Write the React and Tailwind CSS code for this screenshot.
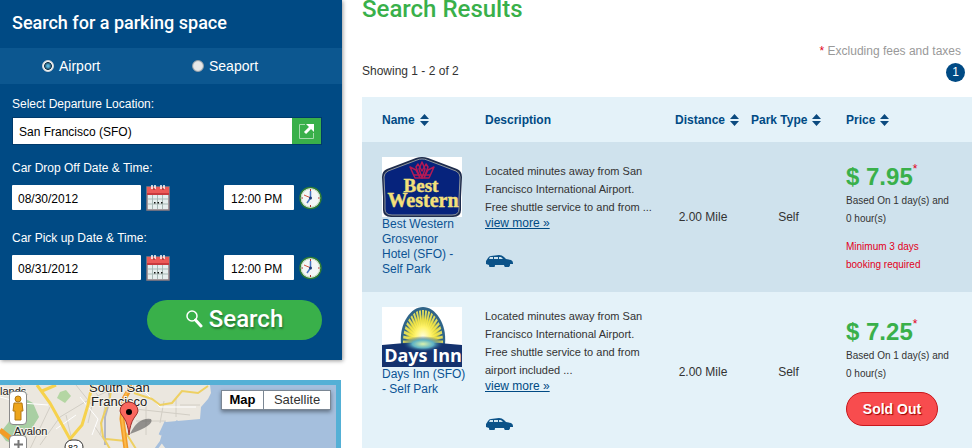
import { useState } from 'react'

const DESCRIPTION_LINES = ['Located minutes away from San', 'Francisco International Airport.']

const LOTS = [
    {
        id: 'best-western',
        name: 'Best Western Grosvenor Hotel (SFO) - Self Park',
        logo: BestWesternLogo,
        description: [...DESCRIPTION_LINES, 'Free shuttle service to and from ...'],
        distance: '2.00 Mile',
        type: 'Self',
        price: '$ 7.95',
        note: 'Minimum 3 days booking required',
    },
    {
        id: 'days-inn',
        name: 'Days Inn (SFO) - Self Park',
        logo: DaysInnLogo,
        description: [...DESCRIPTION_LINES, 'Free shuttle service to and from', 'airport included ...'],
        distance: '2.00 Mile',
        type: 'Self',
        price: '$ 7.25',
        soldOut: true,
    },
]

function BestWesternLogo() {
    return (
        <svg width="80" height="60" viewBox="0 0 80 60" role="img" aria-label="Best Western">
            <rect width="80" height="60" fill="#fff" />
            <path d="M40 0 Q43 0 46 1 L75 12 Q80 14 80 20 L79 40 V53 Q79 60 71 60 H9 Q1 60 1 53 V40 L0 20 Q0 14 5 12 L34 1 Q37 0 40 0Z" fill="#1d2b4c" />
            <path d="M40 2 Q43 2 45 3 L74 14 Q78 16 78 20 L77 42 V52 Q77 58 70 58 H10 Q3 58 3 52 V42 L2 20 Q2 16 6 14 L35 3 Q37 2 40 2Z" fill="#06237c" stroke="#8f979c" strokeWidth="1" />
            <g fill="none" stroke="#b51a55" strokeWidth="1.5" strokeLinejoin="round">
                <path d="M33 21 L28 10 L34 13 L38 21 L34 10 L36 7 L40 14 L44 7 L46 10 L42 21 L46 13 L52 10 L47 21Z" />
                <path d="M40 5 L37 12 L40 21 L43 12Z M32 18 H48" />
            </g>
            <g fill="#f4e07a" stroke="#f4e07a" strokeWidth="0.4" fontFamily="'Liberation Serif', serif" fontWeight="bold" textAnchor="middle">
                <text x="39" y="35" fontSize="19">Best</text>
                <text x="41" y="50" fontSize="20">Western</text>
            </g>
        </svg>
    )
}

const RAYS = Array.from({ length: 21 }, (_, i) => {
    const tip = angle => `${41 + 20 * Math.cos(angle)},${35 + 32 * Math.sin(angle)}`
    const angle = Math.PI + (i * Math.PI) / 20
    return `41,34 ${tip(angle - 0.05)} ${tip(angle + 0.05)}`
})

function DaysInnLogo() {
    return (
        <svg width="80" height="60" viewBox="0 0 80 60" role="img" aria-label="Days Inn">
            <defs>
                <radialGradient id="sun">
                    <stop offset="0" stopColor="#ffffe0" />
                    <stop offset="0.45" stopColor="#fff36a" />
                    <stop offset="0.75" stopColor="#f7e63c" stopOpacity="0.8" />
                    <stop offset="1" stopColor="#f7e63c" stopOpacity="0" />
                </radialGradient>
                <radialGradient id="glow">
                    <stop offset="0" stopColor="#d8f2b0" />
                    <stop offset="0.5" stopColor="#5fb3c4" />
                    <stop offset="1" stopColor="#14326e" stopOpacity="0" />
                </radialGradient>
            </defs>
            <rect width="80" height="60" fill="#fff" />
            <path d="M19 37 C17 16 29 0 41 0 C53 0 65 16 63 37Z" fill="#2f6488" />
            {RAYS.map(points => <polygon key={points} points={points} fill="#dfdc5c" />)}
            <ellipse cx="41" cy="30" rx="18" ry="23" fill="url(#sun)" />
            <path d="M0 38 Q40 33 80 38 V60 H0Z" fill="#14326e" />
            <ellipse cx="41" cy="37" rx="21" ry="8" fill="url(#glow)" />
            <text x="41" y="55" fill="#fff" fontSize="18" fontWeight="bold" fontFamily="'Open Sans', sans-serif" textAnchor="middle">Days Inn</text>
        </svg>
    )
}

function CarIcon() {
    return (
        <svg width="27" height="12" viewBox="0 0 27 12" className="block" aria-hidden="true">
            <path d="M2 3 Q3 1 5 1 L13 0 Q16 0 18 2 L20 4 L25 5 Q27 6 27 8 V9 H24 A3 3 0 0 1 18 10 H9 A3 3 0 0 1 3 10 L0 9 V6Z" fill="#0b5288" />
            <path d="M4 2 H7 V4 H3Z M8 2 H12 V4 H8Z M13 2 H15 L17 4 H13Z" fill="#cfe3ee" />
        </svg>
    )
}

function SortIcon() {
    return (
        <svg width="9" height="12" viewBox="0 0 9 12" aria-hidden="true">
            <path d="M4.500 0 L9 5 H0Z M0 7 H9 L4.500 12Z" fill="#0b4a7f" />
        </svg>
    )
}

function CalendarIcon() {
    return (
        <svg width="24" height="26" viewBox="0 0 24 26" className="block" aria-hidden="true">
            <path d="M1 2 H23 V25 H1Z" fill="#e6eeee" stroke="#8e7c80" strokeWidth="1.500" />
            <path d="M1 2 H23 V9 H1Z" fill="#ec5a58" />
            <path d="M1 8 H23 V10 H1Z" fill="#c93a3e" />
            <path d="M2 14 H22 M2 19 H22 M6.500 10 V24 M11.500 10 V24 M16.500 10 V24" stroke="#a7b8b5" />
            <path d="M6 0 V4 M9 0 V4 M15 0 V4 M18 0 V4" stroke="#fff" strokeWidth="1.500" />
            <path d="M7 4 H9 M16 4 H18" stroke="#7b2429" />
            <path d="M8 17 h1.500 v1.500 h-1.500z M11.500 17 h1.500 v1.500 h-1.500z M15 17 h1.500 v1.500 h-1.500z" fill="#111" />
        </svg>
    )
}

function ClockIcon() {
    return (
        <svg width="23" height="24" viewBox="0 0 23 24" className="block" aria-hidden="true">
            <circle cx="11.500" cy="12" r="10.500" fill="#f4f6f6" stroke="#2f7d35" strokeWidth="1.500" />
            <circle cx="11.500" cy="12" r="9.200" fill="none" stroke="#c9dcc4" />
            <path d="M11.500 3 V5 M11.500 19 V21 M2.500 12 H4 M19 12 H20.500" stroke="#a33" />
            <path d="M11.500 12 V5 M11.500 12 L8 17" stroke="#4a76c4" strokeWidth="1.500" />
            <path d="M12 12 L5 9" stroke="#d0503f" />
            <circle cx="11.500" cy="12" r="1.500" fill="#1e3c78" />
        </svg>
    )
}

function DateTimeRow({ id, label, date, time }) {
    return (
        <div className="pt-[15px] last:pb-5 [&+&]:pt-5">
            <label htmlFor={`${id}-date`} className="block text-xs leading-4">{label}</label>
            <div className="mt-[9px] flex h-[25px] items-center">
                <input id={`${id}-date`} type="text" defaultValue={date} className="h-[25px] w-[129px] rounded-[1px] bg-white px-1.5 pt-0.5 text-xs text-black outline-none" />
                <button type="button" aria-label="Pick a date" className="ml-[5px]"><CalendarIcon /></button>
                <input type="text" aria-label={`${label} time`} defaultValue={time} className="ml-auto h-[25px] w-[70px] rounded-[1px] bg-white px-[7px] pt-0.5 text-xs text-black outline-none" />
                <button type="button" aria-label="Pick a time" className="ml-[5px]"><ClockIcon /></button>
            </div>
        </div>
    )
}

function SearchPanel() {
    const [port, setPort] = useState('Airport')

    return (
        <form onSubmit={e => e.preventDefault()} className="bg-[#004a84] text-white shadow-[1px_1px_4px_#0006]">
            <h2 className="flex h-12 items-center px-3 pb-0.5 font-['Roboto',sans-serif] text-lg font-medium">Search for a parking space</h2>
            <div className="flex h-9 items-center bg-[#0c5790] pl-[42px]">
                {['Airport', 'Seaport'].map(name => (
                    <label key={name} className="flex w-[150px] items-center gap-[5px] text-sm">
                        <input
                            type="radio"
                            name="port"
                            checked={port === name}
                            onChange={() => setPort(name)}
                            className="size-3 appearance-none rounded-full border border-[#9aa3aa] bg-[radial-gradient(#e8e8e8_50%,#c8c8c8)] checked:border-[#d5d9dc] checked:bg-[radial-gradient(#59b5dd_15%,#15384f_50%,#f2f2f2_60%)]"
                        />
                        {name}
                    </label>
                ))}
            </div>
            <div className="pt-3 pr-5 pb-5 pl-3">
                <label htmlFor="location" className="block text-xs leading-4">Select Departure Location:</label>
                <div className="mt-[5px] flex h-7 border border-[#003a6b]">
                    <input id="location" type="text" defaultValue="San Francisco (SFO)" className="min-w-0 flex-1 bg-white px-1.5 pt-0.5 text-xs text-black outline-none" />
                    <button type="button" aria-label="Show locations" className="flex w-[29px] items-center justify-center bg-[#39b04a]">
                        <svg width="17" height="17" viewBox="0 0 17 17" fill="none" aria-hidden="true">
                            <path d="M7 1.500 H1.500 V15.500 H15.500 V10" stroke="#a5dcab" />
                            <path d="M7 10 L13 4" stroke="#fff" strokeWidth="3" />
                            <path d="M8 1 H16 V9Z" fill="#fff" />
                        </svg>
                    </button>
                </div>
                <div>
                    <DateTimeRow id="dropoff" label="Car Drop Off Date & Time:" date="08/30/2012" time="12:00 PM" />
                    <DateTimeRow id="pickup" label="Car Pick up Date & Time:" date="08/31/2012" time="12:00 PM" />
                </div>
                <button type="submit" className="ml-auto flex h-10 w-[175px] items-center justify-center gap-1.5 rounded-full bg-[#39b04a] pb-0.5 font-['Roboto',sans-serif] text-2xl font-medium [text-shadow:1px_2px_2px_#0005]">
                    <svg width="17" height="18" viewBox="0 0 17 18" fill="none" stroke="#fff" aria-hidden="true">
                        <circle cx="6" cy="6" r="5" strokeWidth="1.500" />
                        <path d="M9.500 10 L15 16" strokeWidth="3" strokeLinecap="round" />
                    </svg>
                    Search
                </button>
            </div>
        </form>
    )
}

function MapPanel() {
    return (
        <div className="relative mt-5 mr-px min-h-[68px] flex-1 overflow-hidden border-t-[5px] border-r-[5px] border-[#54b0d6] bg-[#a5bfdd]">
            <div className="h-0">
                <svg width="336" height="64" viewBox="0 0 336 64" className="block" aria-hidden="true">
                    <path d="M0 0 H210 L211 8 L208 14 L201 22 L200 34 L166 37 L163 45 L160 56 L166 64 H0Z" fill="#ebe7df" />
                    <path d="M0 48 L8 38 L22 12 L33 18 L39 32 L30 46 L18 60 L6 56Z" fill="#a9cfa3" />
                    <path d="M60 7 L66 5 L71 11 L65 18 L57 13Z" fill="#b4d6a3" />
                    <g fill="none" stroke="#d2cec5">
                        <path d="M40 60 L60 32 L85 17 L110 5 M76 0 L92 20 L88 38 M20 0 L28 10 M95 42 L110 64 M135 24 L190 30 M146 18 V50 M164 16 L160 38 M176 14 V32 M136 36 H166 M90 0 L105 20 L100 50 M50 22 L30 64 M66 30 L74 64 M180 20 H200" />
                    </g>
                    <g fill="none" stroke="#fff">
                        <path d="M0 12 L22 18 L48 20 M56 44 L76 30 M80 12 L98 34 L92 50 M144 6 L160 22 L196 22 M0 2 L20 8" />
                    </g>
                    <path d="M108 0 L110 14 L105 32 L105 60" fill="none" stroke="#b2b6c5" strokeWidth="2" />
                    <path d="M178 36 L169 46 L156 64 M166 37 L160 50" fill="none" stroke="#a5bfdd" strokeWidth="3" />
                    <path d="M37 0 L50 18 L70 54 L76 64 M42 6 L56 0 M70 54 L82 40 L88 20 L92 0" fill="none" stroke="#f6d24d" strokeWidth="3" />
                    <path d="M112 0 L110 12 L101 38 L103 52 L110 64 M106 54 L126 56 M126 48 L136 64 M134 8 L152 14 L160 20 L172 18 L182 6 L198 8 L208 1" fill="none" stroke="#eed062" strokeWidth="2" />
                    <path d="M132 0 L124 14 L122 34 L126 64 M0 45 L14 56" fill="none" stroke="#f29b27" strokeWidth="5" />
                    <path d="M130 0 L124 14 L122 34 L126 64" fill="none" stroke="#fbb84a" strokeWidth="2" />
                    <path d="M130 49 Q138 32 151 34 Q155 40 130 49Z" fill="#555" opacity="0.6" />
                    <g fill="#222" stroke="#f7f4ec" strokeWidth="2" paintOrder="stroke" fontFamily="'Liberation Sans', sans-serif" fontSize="13">
                        <text x="89" y="7">South San</text>
                        <text x="91" y="21">Francisco</text>
                        <text x="0" y="10" fontSize="11">lands</text>
                        <text x="14" y="50" fontSize="11">Avalon</text>
                    </g>
                    <rect x="65" y="55" width="18" height="14" rx="7" fill="#fff" stroke="#333" />
                    <text x="68" y="66" fontSize="9" fontFamily="'Liberation Sans', sans-serif">82</text>
                    <path d="M129 50 Q128 39 124 33 Q120 28 120 26 A9 9 0 0 1 138 26 Q138 28 134 33 Q130 39 129 50Z" fill="#fa675e" stroke="#9c302b" />
                    <circle cx="129" cy="27" r="3" fill="#000" />
                </svg>
            </div>
            <div className="absolute top-[6px] left-[9px] flex flex-col items-center gap-2.5">
                <button type="button" aria-label="Street View" className="flex h-[34px] w-[18px] items-center justify-center rounded-sm border border-[#8a8a8a] bg-white">
                    <svg width="12" height="26" viewBox="0 0 12 26" fill="#eda51b" stroke="#b47a13" aria-hidden="true">
                        <circle cx="6" cy="4" r="3" />
                        <path d="M2 8 H10 L11 16 H9 V25 H3 V16 H1Z" />
                    </svg>
                </button>
                <button type="button" aria-label="Zoom in" className="flex size-[18px] items-center justify-center rounded-sm border border-[#8a8a8a] bg-white">
                    <svg width="9" height="9" viewBox="0 0 9 9" aria-hidden="true"><path d="M4.500 0 V9 M0 4.500 H9" stroke="#777" strokeWidth="2" /></svg>
                </button>
            </div>
            <div className="absolute top-[5px] right-[5px] flex h-5 border border-[#7b8794] bg-white text-[13px] leading-[18px] text-[#333] shadow-[0_2px_4px_#0006]">
                <button type="button" className="w-[42px] border-r border-[#7b8794] font-bold text-black">Map</button>
                <button type="button" className="w-[66px]">Satellite</button>
            </div>
        </div>
    )
}

function HeaderCell({ children, sortable = true, className = '' }) {
    return (
        <th className={`h-[45px] p-0 text-left ${className}`}>
            {sortable ? (
                <button type="button" className="flex items-center gap-[5px] font-bold whitespace-nowrap">
                    {children}
                    <SortIcon />
                </button>
            ) : children}
        </th>
    )
}

function LotRow({ lot }) {
    const Logo = lot.logo

    return (
        <tr className="odd:bg-[#cfe2ed] even:bg-[#e4f2f9]">
            <td className="py-[15px] pl-5 align-top">
                <Logo />
                <a href="#" className="block w-[84px] text-xs leading-[15px] text-[#0b5394]">{lot.name}</a>
            </td>
            <td className="py-[15px] text-[11px] leading-[18px]">
                {lot.description.map(line => <p key={line}>{line}</p>)}
                <a href="#" className="block text-xs leading-[15px] text-[#004a84] underline">view more »</a>
                <div className="mt-6 mb-1.5 pl-px"><CarIcon /></div>
            </td>
            <td className="pr-5 text-center">{lot.distance}</td>
            <td className="pr-5 text-center">{lot.type}</td>
            <td>
                <p className="flex h-8 items-start text-2xl leading-[34px] font-bold text-[#39b04a]">
                    {lot.price}
                    <span className="text-xs leading-[18px] font-normal text-[#e2001a]">*</span>
                </p>
                <p className="w-[110px] text-[10px] leading-[18px]">Based On 1 day(s) and 0 hour(s)</p>
                {lot.note && <p className="mt-2.5 w-[90px] text-[10px] leading-[18px] text-[#e2001a]">{lot.note}</p>}
                {lot.soldOut && (
                    <button type="button" className="mt-[9px] mb-[3px] block h-[34px] w-[92px] rounded-full border border-[#c8171c] bg-[#f84c4e] text-sm font-bold text-white [text-shadow:1px_1px_1px_#900]">
                        Sold Out
                    </button>
                )}
            </td>
        </tr>
    )
}

function Results() {
    return (
        <main className="min-w-0 flex-1 pr-1 pl-5 text-xs text-[#333]">
            <h1 className="h-[42px] font-['Roboto',sans-serif] text-2xl leading-[18px] font-medium text-[#39b04a]">Search Results</h1>
            <div className="flex h-[55px] items-start justify-between">
                <p className="pt-[21px] leading-4">Showing 1 - 2 of 2</p>
                <div className="flex flex-col items-end pr-[7px]">
                    <p className="pr-1 leading-[18px] text-[#999]"><span className="text-[#e2001a]">*</span> Excluding fees and taxes</p>
                    <button type="button" className="mt-[3px] size-[19px] rounded-full bg-[#004a84] leading-[19px] text-white">1</button>
                </div>
            </div>
            <table className="w-full table-fixed">
                <thead className="bg-[#e4f2f9] text-[#004a84]">
                    <tr>
                        <HeaderCell className="w-[123px] pl-5">Name</HeaderCell>
                        <HeaderCell sortable={false}>Description</HeaderCell>
                        <HeaderCell className="w-[76px]">Distance</HeaderCell>
                        <HeaderCell className="w-[95px]">Park Type</HeaderCell>
                        <HeaderCell className="w-[126px]">Price</HeaderCell>
                    </tr>
                </thead>
                <tbody>
                    {LOTS.map(lot => <LotRow key={lot.id} lot={lot} />)}
                </tbody>
            </table>
        </main>
    )
}

export default function App() {
    return (
        <div className="flex h-screen overflow-hidden bg-white font-['Liberation_Sans',Arial,sans-serif]">
            <aside className="flex w-[342px] shrink-0 flex-col">
                <SearchPanel />
                <MapPanel />
            </aside>
            <Results />
        </div>
    )
}
